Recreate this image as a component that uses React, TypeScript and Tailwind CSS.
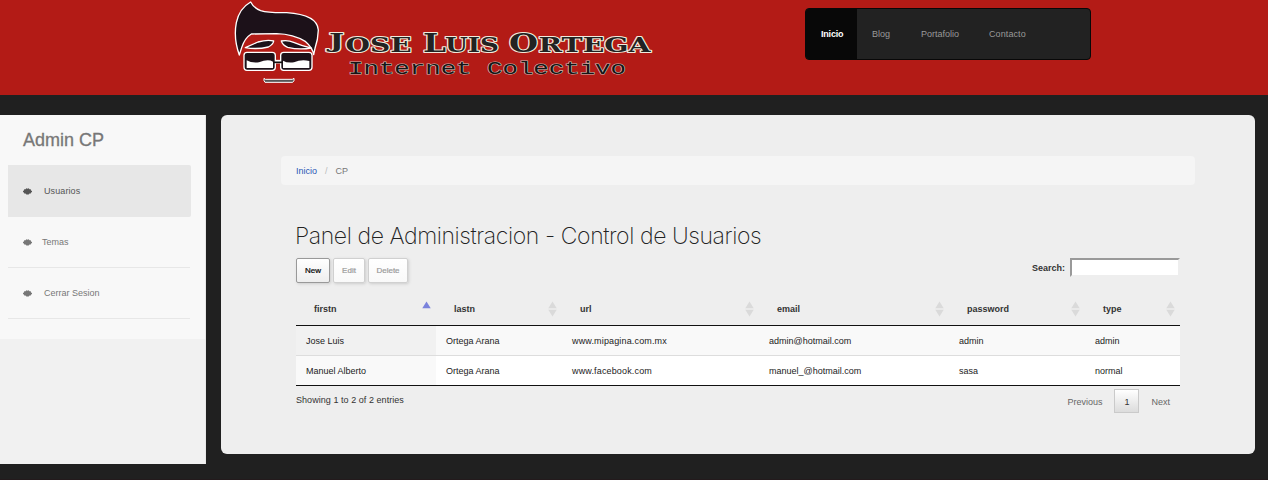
const columns = [
  { name: 'firstn', width: 'w-[140px]' },
  { name: 'lastn', width: 'w-[126px]' },
  { name: 'url', width: 'w-[197px]' },
  { name: 'email', width: 'w-[190px]' },
  { name: 'password', width: 'w-[136px]' },
  { name: 'type', width: 'w-[95px]' },
];

const rows = [
  ['Jose Luis', 'Ortega Arana', 'www.mipagina.com.mx', 'admin@hotmail.com', 'admin', 'admin'],
  ['Manuel Alberto', 'Ortega Arana', 'www.facebook.com', 'manuel_@hotmail.com', 'sasa', 'normal'],
];

function Logo() {
  return (
    <svg width="435" height="95" viewBox="0 0 435 95" role="img" aria-label="Jose Luis Ortega">
      <g transform="scale(.33333)" stroke="#fff" strokeWidth="4" strokeLinejoin="round" fill="#1c1119">
        <path d="M77 6 Q86 24 107 32 Q130 39 185 38 C245 42 278 59 280 90 Q279 120 270 145 L266 164 Q263 143 242 125 Q205 102 155 101 L79 102 Q59 114 50 143 L43 165 Q25 115 34 68 Q43 25 77 6Z" />
        <path d="M61 143 Q81 134 99 126 Q127 118 146 123 Q145 133 130 141 Q96 149 61 143Z" />
        <path d="M169 123 Q188 119 208 128 Q231 138 258 144 Q223 150 188 142 Q173 136 169 123Z" />
        <rect x="57" y="157" width="94" height="54" rx="9" />
        <rect x="167" y="157" width="94" height="54" rx="9" />
        <path d="M151 185H167" strokeWidth="11" />
        <path d="M146 187H172" stroke="#111" strokeWidth="5" />
        <path d="M65 181 Q80 190 102 187 Q129 176 144 185 V204 H65Z" fill="#fff" stroke="none" />
        <path d="M174 182 Q187 190 207 187 Q229 177 253 183 V204 H174Z" fill="#fff" stroke="none" />
        <path d="M117 235 L121 238 L202 238 L207 235 V242 L203 247 H120 L117 242Z" fill="#555" strokeWidth="3" />
      </g>
      <g fontFamily="DejaVu Serif, serif" fontWeight="700" fill="#222" stroke="#f1eadb" strokeWidth="2" paintOrder="stroke" strokeLinejoin="round">
        <text x="104" y="48" fontSize="20" textLength="15" lengthAdjust="spacingAndGlyphs">J</text>
        <text x="120.5" y="52" fontSize="20.5" textLength="66" lengthAdjust="spacingAndGlyphs">OSE</text>
        <text x="198" y="52" fontSize="25.5" textLength="23" lengthAdjust="spacingAndGlyphs">L</text>
        <text x="220" y="52" fontSize="20.5" textLength="54" lengthAdjust="spacingAndGlyphs">UIS</text>
        <text x="284" y="52" fontSize="25.5" textLength="29" lengthAdjust="spacingAndGlyphs">O</text>
        <text x="313.5" y="52" fontSize="20.5" textLength="112" lengthAdjust="spacingAndGlyphs">RTEGA</text>
      </g>
      <text x="123" y="74" fontFamily="Liberation Mono, monospace" fontSize="18" textLength="278" lengthAdjust="spacingAndGlyphs" fill="#151515" stroke="#c9b9b3" strokeWidth="1.1" paintOrder="stroke">Internet Colectivo</text>
    </svg>
  );
}

function SortIcon({ active }: { active?: boolean }) {
  return (
    <svg className="mr-[5px] mb-px" width="9" height="16" viewBox="0 0 9 16">
      <path d="M4.5 0.5 8.7 7.3H.3Z" fill={active ? '#7a82dc' : '#dadada'} />
      {!active && <path d="M.3 8.7H8.7L4.5 15.5Z" fill="#dadada" />}
    </svg>
  );
}

function Gear() {
  return (
    <svg className="shrink-0" width="9" height="7" viewBox="0 0 9 7" fill="currentColor">
      <path d="M0 3 .9 2.6 1.2 1.2 2.6 1.2 3.4.3 4.5.8 5.7.3 6.5 1.2 7.8 1.2 8 2.6 9 3V4L8.1 4.4 7.8 5.5 6.5 5.6 5.7 6.5H3.4L2.5 5.6 1.2 5.5.9 4.4 0 4Z" />
    </svg>
  );
}

export default function App() {
  return (
    <div className="h-[480px] w-[1268px] overflow-hidden border-b border-[#231a1c] bg-[#202020] font-['Liberation_Sans',sans-serif] text-[9px] leading-[13px] text-[#333]">
      <header className="flex h-[95px] items-start bg-[#b31b16] pl-[225px]">
        <Logo />
        <nav className="mt-2 ml-[145px] flex h-[52px] w-[286px] overflow-hidden rounded-[4px] border border-[#080808] bg-[#222] leading-[50px] text-[#999]">
          <a className="w-[51px] bg-[#080808] pl-[15px] font-bold tracking-[-0.2px] text-white">Inicio</a>
          <a className="w-[49px] pl-[15px]">Blog</a>
          <a className="w-[68px] pl-[15px]">Portafolio</a>
          <a className="w-[68px] pl-[15px] tracking-[0.1px]">Contacto</a>
        </nav>
      </header>

      <div className="flex pt-5">
        <aside className="h-[349px] w-[206px] border-r border-[#e7e7e7] bg-[#f1f1f1] text-[#777]">
          <div className="h-[224px] bg-[#f8f8f8] pl-2">
            <h2 className="h-[50px] pl-[15px] text-[18px] leading-[50px] [-webkit-text-stroke:0.3px_#777]">Admin CP</h2>
            <a className="flex h-[52px] w-[183px] items-center rounded-r-[2px] bg-[#e7e7e7] pl-[15px] text-[#555]">
              <Gear /><span className="ml-[12px] tracking-[0.1px]">Usuarios</span>
            </a>
            <a className="flex h-[51px] w-[182px] items-center border-b border-[#e7e7e7] pl-[15px]">
              <Gear /><span className="ml-[10px]">Temas</span>
            </a>
            <a className="flex h-[51px] w-[182px] items-center border-b border-[#e7e7e7] pl-[15px]">
              <Gear /><span className="ml-[12px]">Cerrar Sesion</span>
            </a>
          </div>
        </aside>

        <main className="ml-[15px] h-[339px] w-[1034px] rounded-[6px] bg-[#eee] pt-[41px] pl-[60px]">
          <div className="flex h-[29px] w-[914px] items-center rounded-[4px] bg-[#f5f5f5] pt-px pl-[15px]">
            <a className="text-[#2a55b5]">Inicio</a>
            <span className="mx-[8px] text-[#bbb]">/</span>
            <span className="text-[#777]">CP</span>
          </div>

          <section className="ml-[15px] w-[884px] pt-[37px]">
            <h1 className="-ml-px h-[29px] font-['Inter',sans-serif] text-[23px] leading-[29px] font-extralight tracking-[-0.41px] whitespace-nowrap text-[#222]">Panel de Administracion - Control de Usuarios</h1>
            <div className="mt-[7px] flex h-[26px] items-start justify-between">
              <div className="flex gap-[3px] text-[8px]">
                <button className="h-[25px] w-[34px] rounded-[2px] border border-[#999] bg-linear-to-b from-white to-[#eee] text-black shadow-[1px_1px_3px_#ccc] [-webkit-text-stroke:0.2px_#000]">New</button>
                <button className="h-[25px] w-[32px] rounded-[2px] border border-[#d0d0d0] bg-linear-to-b from-white to-[#f9f9f9] text-[#999] shadow-[1px_1px_3px_#ccc] [-webkit-text-stroke:0.2px_#999]">Edit</button>
                <button className="h-[25px] w-[40px] rounded-[2px] border border-[#d0d0d0] bg-linear-to-b from-white to-[#f9f9f9] text-[#999] shadow-[1px_1px_3px_#ccc] [-webkit-text-stroke:0.2px_#999]">Delete</button>
              </div>
              <label className="flex items-center gap-[5px] font-bold">
                <span className="pt-[2px]">Search:</span>
                <input className="h-[19px] w-[110px] border-2 border-t-[#999] border-r-[#eee] border-b-[#eee] border-l-[#999] bg-white outline-none" />
              </label>
            </div>

            <div className="mt-[9px] flex h-[33px] border-b border-[#111] font-bold">
              {columns.map((c, i) => (
                <div key={c.name} className={`${c.width} flex items-center justify-between pl-[18px]`}>
                  <span>{c.name}</span>
                  <SortIcon active={i === 0} />
                </div>
              ))}
            </div>
            {rows.map((row, r) => (
              <div key={row[0]} className={`flex h-[30px] border-b text-[#222] ${r === 0 ? 'border-[#ddd] bg-[#f9f9f9]' : 'border-[#111] bg-white'}`}>
                {row.map((cell, i) => (
                  <div key={columns[i].name} className={`${columns[i].width} pl-[10px] leading-[30px] ${i === 2 ? 'tracking-[0.15px]' : ''} ${i === 0 ? (r === 0 ? 'bg-[#f1f1f1]' : 'bg-[#f9f9f9]') : ''}`}>{cell}</div>
                ))}
              </div>
            ))}
            <div className="flex items-start justify-between">
              <span className="mt-[8px] tracking-[0.05px]">Showing 1 to 2 of 2 entries</span>
              <div className="mt-[3px] flex h-[24px] pr-[10px] leading-[26px] text-[#666]">
                <span>Previous</span>
                <span className="mr-[12px] ml-[12px] w-[25px] border border-[#cacaca] bg-linear-to-b from-white to-[#dcdcdc] text-center leading-[24px] text-[#333]">1</span>
                <span>Next</span>
              </div>
            </div>
          </section>
        </main>
      </div>
    </div>
  );
}
